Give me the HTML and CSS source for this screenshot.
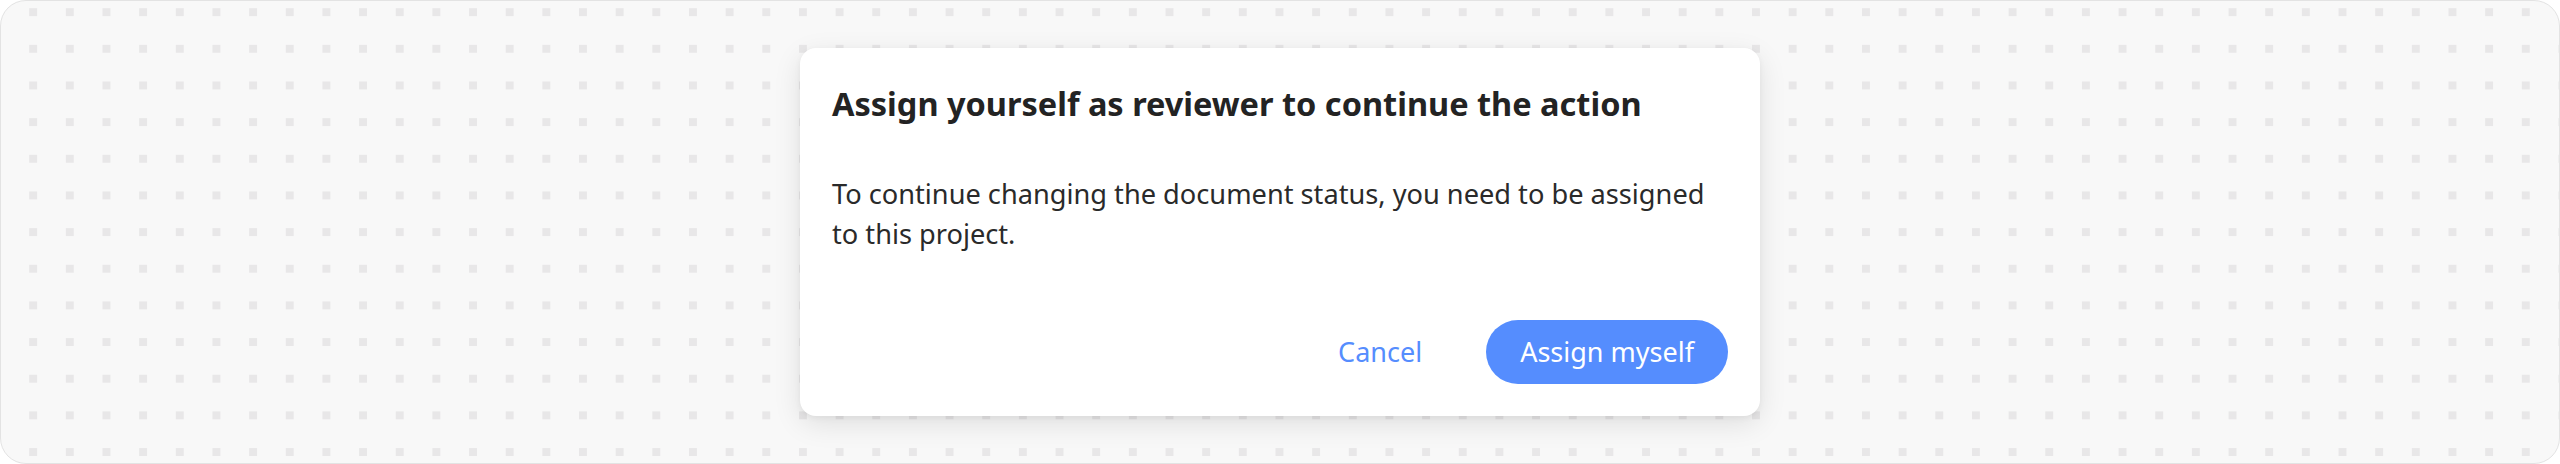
FILE: index.html
```html
<!DOCTYPE html>
<html lang="en">
<head>
<meta charset="utf-8">
<title>Assign yourself as reviewer</title>
<link rel="stylesheet" href="styles.css">
</head>
<body>
<div class="canvas">
  <div class="dialog" role="dialog" aria-labelledby="dlg-title">
    <h2 class="dialog-title" id="dlg-title">Assign yourself as reviewer to continue the action</h2>
    <p class="dialog-text">To continue changing the document status, you need to be assigned to this project.</p>
    <div class="dialog-actions">
      <button class="btn btn-text" type="button">Cancel</button>
      <button class="btn btn-primary" type="button">Assign myself</button>
    </div>
  </div>
</div>
</body>
</html>
```
FILE: styles.css
```css
html, body {
  margin: 0;
  padding: 0;
  background: #ffffff;
}

body {
  font-family: "Noto Sans", "Open Sans", sans-serif;
  width: 2560px;
  height: 464px;
}

.canvas {
  box-sizing: border-box;
  width: 2560px;
  height: 464px;
  border: 1px solid #e3e3e3;
  border-radius: 26px;
  background-color: #f8f8f8;
  background-image:
    linear-gradient(to bottom, transparent 0, transparent 7.5px, #f8f8f8 7.5px, #f8f8f8 100%),
    linear-gradient(to right, #e8e7e8 0, #e8e7e8 7.5px, #f8f8f8 7.5px, #f8f8f8 100%);
  background-size: 36.667px 36.667px, 36.667px 36.667px;
  background-position: 28.2px 7.2px, 28.2px 7.2px;
  display: flex;
  align-items: center;
  justify-content: center;
}

.dialog {
  box-sizing: border-box;
  width: 960px;
  height: 368px;
  padding: 32px;
  background: #ffffff;
  border-radius: 16px;
  box-shadow: 0 8px 28px rgba(0, 0, 0, 0.10), 0 2px 6px rgba(0, 0, 0, 0.05);
  display: flex;
  flex-direction: column;
}

.dialog-title {
  margin: 0;
  font-size: 32.5px;
  line-height: 48px;
  font-weight: 700;
  color: #232323;
}

.dialog-text {
  margin: 46px 0 0;
  font-size: 27.2px;
  line-height: 40px;
  font-weight: 400;
  color: #2a2a2a;
}

.dialog-actions {
  margin-top: auto;
  display: flex;
  justify-content: flex-end;
  align-items: center;
  gap: 32px;
}

.btn {
  font-family: inherit;
  font-size: 27px;
  line-height: 36px;
  height: 64px;
  border: none;
  border-radius: 32px;
  padding: 0 34px;
  cursor: pointer;
  background: transparent;
}

.btn-text {
  color: #558dfe;
  padding: 0 32px;
}

.btn-primary {
  background: #558dfe;
  color: #ffffff;
}
```
